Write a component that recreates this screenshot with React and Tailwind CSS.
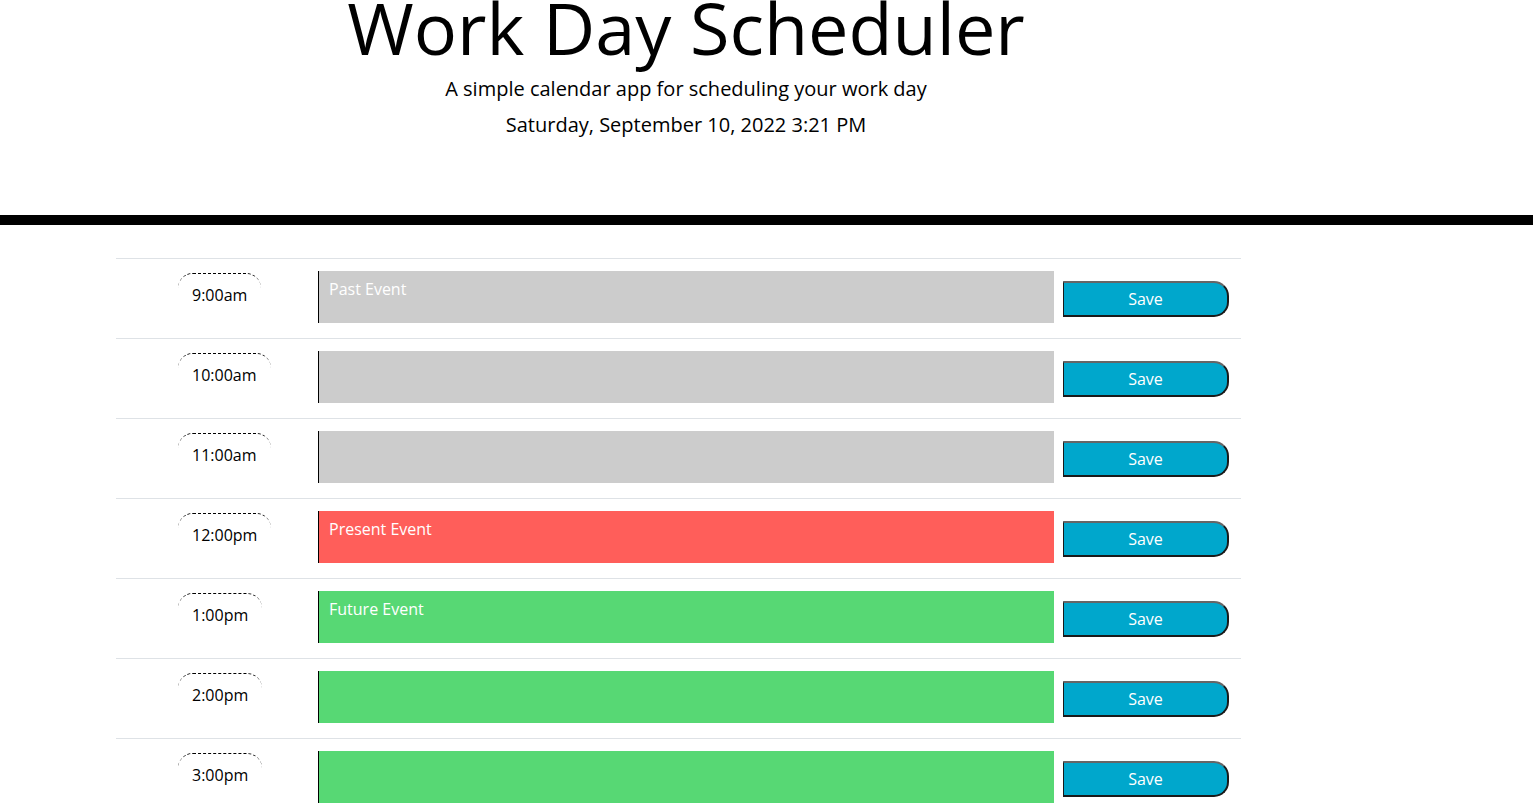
import React from "react";

const hours = [
  { label: "9:00am", state: "past", text: "Past Event" },
  { label: "10:00am", state: "past", text: "" },
  { label: "11:00am", state: "past", text: "" },
  { label: "12:00pm", state: "present", text: "Present Event" },
  { label: "1:00pm", state: "future", text: "Future Event" },
  { label: "2:00pm", state: "future", text: "" },
  { label: "3:00pm", state: "future", text: "" },
];

const stateClass = {
  past: "bg-[#cccccc]",
  present: "bg-[#ff5e5a]",
  future: "bg-[#57d874]",
};

function TimeBlock({ label, state, text }) {
  return (
    <div className="flex h-[80px] border-t border-[#dee2e6]">
      <div className="w-[202px] shrink-0 pl-[62px] pt-[14px]">
        <div className="inline-block rounded-t-[15px] border-t border-dashed border-black px-[14px] pt-[9px] text-[16px] leading-[24px] text-black">
          {label}
        </div>
      </div>
      <textarea
        defaultValue={text}
        className={`mt-[12px] h-[52px] w-[736px] shrink-0 resize-none border-l border-black px-[10px] pt-[6px] text-[16px] leading-[24px] text-white outline-none ${stateClass[state]}`}
      />
      <button className="ml-[9px] mt-[22px] h-[36px] w-[166px] shrink-0 rounded-r-[15px] border-2 border-l border-[#1a1a1a] border-t-[#666666] bg-[#00a7cc] text-[16px] text-white">
        Save
      </button>
    </div>
  );
}

export default function App() {
  return (
    <div className="min-h-screen overflow-hidden bg-white font-['Open_Sans',sans-serif] text-black">
      <header className="flex h-[215px] w-[1372px] flex-col items-center text-center">
        <h1 className="mt-[-16px] text-[72px] font-normal leading-[1.2]">
          Work Day Scheduler
        </h1>
        <p className="mt-[4px] text-[20px] leading-[30px]">
          A simple calendar app for scheduling your work day
        </p>
        <p className="mt-[6px] text-[20px] leading-[30px]">
          Saturday, September 10, 2022 3:21 PM
        </p>
      </header>
      <div className="h-[10px] w-full bg-black" />
      <div className="ml-[116px] mt-[33px] w-[1125px]">
        {hours.map((h) => (
          <TimeBlock key={h.label} {...h} />
        ))}
      </div>
    </div>
  );
}
